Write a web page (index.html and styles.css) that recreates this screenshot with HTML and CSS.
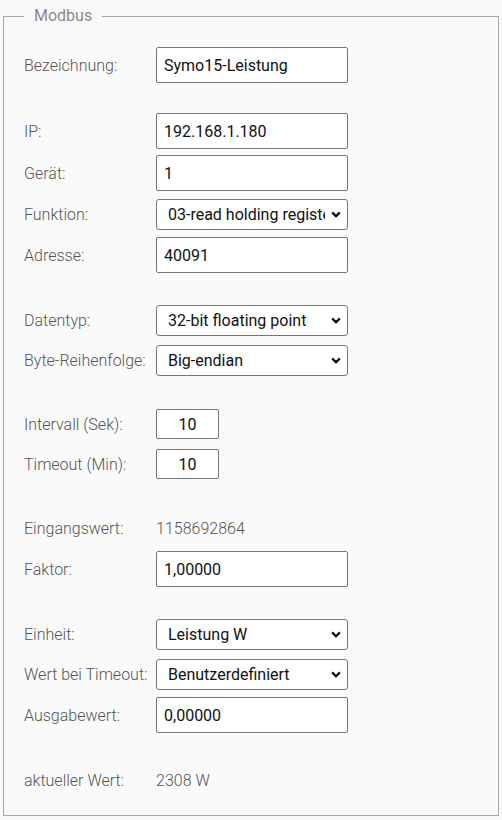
FILE: index.html
```html
<!DOCTYPE html>
<html lang="de">
<head>
<meta charset="utf-8">
<title>Modbus</title>
<link rel="stylesheet" href="styles.css">
</head>
<body>
<fieldset class="box">
  <legend class="legend">Modbus</legend>

  <div class="group">
    <div class="row tall"><label class="lbl">Bezeichnung:</label><input class="field" type="text" value="Symo15-Leistung"></div>
  </div>

  <div class="group">
    <div class="row tall"><label class="lbl">IP:</label><input class="field" type="text" value="192.168.1.180"></div>
    <div class="row tall"><label class="lbl">Gerät:</label><input class="field" type="text" value="1"></div>
    <div class="row"><label class="lbl">Funktion:</label><select class="sel"><option>03-read holding register</option></select></div>
    <div class="row tall"><label class="lbl">Adresse:</label><input class="field" type="text" value="40091"></div>
  </div>

  <div class="group">
    <div class="row"><label class="lbl">Datentyp:</label><select class="sel"><option>32-bit floating point</option></select></div>
    <div class="row"><label class="lbl">Byte-Reihenfolge:</label><select class="sel"><option>Big-endian</option></select></div>
  </div>

  <div class="group">
    <div class="row"><label class="lbl">Intervall (Sek):</label><input class="field small" type="text" value="10"></div>
    <div class="row"><label class="lbl">Timeout (Min):</label><input class="field small" type="text" value="10"></div>
  </div>

  <div class="group">
    <div class="row"><span class="lbl">Eingangswert:</span><span class="val">1158692864</span></div>
    <div class="row tall"><label class="lbl">Faktor:</label><input class="field" type="text" value="1,00000"></div>
  </div>

  <div class="group">
    <div class="row"><label class="lbl">Einheit:</label><select class="sel"><option>Leistung W</option></select></div>
    <div class="row"><label class="lbl">Wert bei Timeout:</label><select class="sel"><option>Benutzerdefiniert</option></select></div>
    <div class="row tall"><label class="lbl">Ausgabewert:</label><input class="field" type="text" value="0,00000"></div>
  </div>

  <div class="group">
    <div class="row"><span class="lbl">aktueller Wert:</span><span class="val">2308 W</span></div>
  </div>
</fieldset>
</body>
</html>
```

FILE: styles.css
```css
html, body {
  margin: 0;
  background: #fafafa;
}

body {
  font-family: Roboto, "Liberation Sans", sans-serif;
  padding: 6px 3px 0 3px;
}

.box {
  margin: 0;
  border: 1px solid #a9a9a9;
  padding: 18px 20px 15px 20px;
  min-inline-size: 0;
}

.legend {
  padding: 0 10px;
  font-size: 16px;
  line-height: 20px;
  color: #8a8a8a;
  font-weight: 400;
}

.group + .group {
  margin-top: 24px;
}

.row {
  display: grid;
  grid-template-columns: 132px auto;
  align-items: center;
  justify-items: start;
  height: 40px;
}

.row.tall {
  height: 42px;
}

.lbl,
.val {
  font-size: 16px;
  font-weight: 300;
  color: #555;
}

.field {
  box-sizing: border-box;
  width: 192px;
  height: 36px;
  margin: 0;
  padding: 0 7px;
  border: 1px solid #767676;
  border-radius: 2px;
  background: #fff;
  font-family: Roboto, "Liberation Sans", sans-serif;
  font-size: 16px;
  color: #111;
}

.field.small {
  width: 63px;
  height: 30px;
  text-align: center;
}

.sel {
  box-sizing: border-box;
  width: 192px;
  height: 31px;
  margin: 0;
  padding: 0 22px 0 11px;
  border: 1px solid #767676;
  border-radius: 3px;
  appearance: none;
  -webkit-appearance: none;
  background: #fff url("data:image/svg+xml;utf8,<svg xmlns='http://www.w3.org/2000/svg' width='10' height='7' viewBox='0 0 10 7'><path d='M1.2 1.4 L5 5.2 L8.8 1.4' fill='none' stroke='black' stroke-width='2.2'/></svg>") no-repeat right 6px center;
  font-family: Roboto, "Liberation Sans", sans-serif;
  font-size: 16px;
  color: #111;
}
```
